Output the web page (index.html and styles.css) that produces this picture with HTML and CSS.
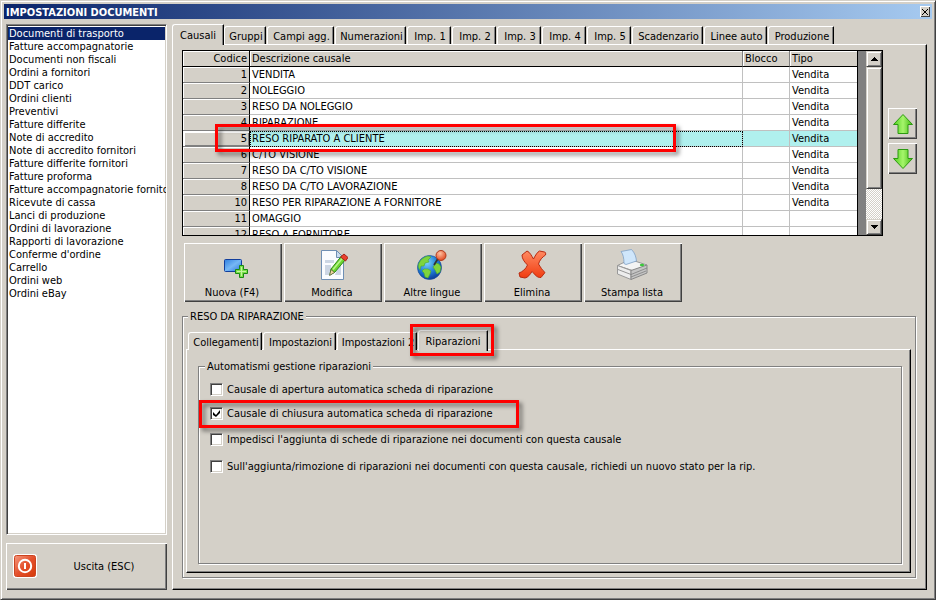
FILE: index.html
```html
<!DOCTYPE html>
<html lang="it">
<head>
    <meta charset="UTF-8">
    <meta name="viewport" content="width=device-width, initial-scale=1.0">
    <title>Impostazioni documenti</title>
    <link rel="stylesheet" href="styles.css">
</head>
<body>

<div class="window">
    <div class="titlebar">
        <h1>IMPOSTAZIONI DOCUMENTI</h1>
        <button class="close" aria-label="Chiudi">
            <svg width="6" height="6" viewBox="0 0 6 6"><path d="M0 0l6 6M6 0L0 6" stroke="#000"/></svg>
        </button>
    </div>

    <div class="workspace">
        <div class="sidebar">
            <select class="doclist" size="21" aria-label="Tipo documento">
                <option selected>Documenti di trasporto</option>
                <option>Fatture accompagnatorie</option>
                <option>Documenti non fiscali</option>
                <option>Ordini a fornitori</option>
                <option>DDT carico</option>
                <option>Ordini clienti</option>
                <option>Preventivi</option>
                <option>Fatture differite</option>
                <option>Note di accredito</option>
                <option>Note di accredito fornitori</option>
                <option>Fatture differite fornitori</option>
                <option>Fatture proforma</option>
                <option>Fatture accompagnatorie fornito</option>
                <option>Ricevute di cassa</option>
                <option>Lanci di produzione</option>
                <option>Ordini di lavorazione</option>
                <option>Rapporti di lavorazione</option>
                <option>Conferme d'ordine</option>
                <option>Carrello</option>
                <option>Ordini web</option>
                <option>Ordini eBay</option>
            </select>
            <button class="btn exit">
                <svg width="24" height="24" viewBox="0 0 24 24">
                    <defs><linearGradient id="red" x1="0" y1="0" x2="1" y2="1"><stop offset="0" stop-color="#f59a80"/><stop offset=".5" stop-color="#e4502c"/><stop offset="1" stop-color="#d63a08"/></linearGradient></defs>
                    <rect x="0" y="0" width="24" height="24" rx="3" fill="#fff"/>
                    <rect x="1.500" y="1.500" width="21" height="21" rx="2" fill="url(#red)" stroke="#cc4420"/>
                    <circle cx="12" cy="12" r="6.200" fill="none" stroke="#fff" stroke-width="2"/>
                    <path d="M12 9v6" stroke="#fff" stroke-width="2"/>
                </svg>
                <span>Uscita (ESC)</span>
            </button>
        </div>

        <div class="main">
            <div class="tabs tabs-main" role="tablist">
                <button class="tab selected" role="tab" aria-selected="true">Causali</button>
                <button class="tab" role="tab">Gruppi</button>
                <button class="tab" role="tab">Campi agg.</button>
                <button class="tab" role="tab">Numerazioni</button>
                <button class="tab" role="tab">Imp. 1</button>
                <button class="tab" role="tab">Imp. 2</button>
                <button class="tab" role="tab">Imp. 3</button>
                <button class="tab" role="tab">Imp. 4</button>
                <button class="tab" role="tab">Imp. 5</button>
                <button class="tab" role="tab">Scadenzario</button>
                <button class="tab" role="tab">Linee auto</button>
                <button class="tab" role="tab">Produzione</button>
            </div>

            <div class="page page-main">
                <div class="list-row">
                    <div class="grid">
                        <table class="causali">
                            <thead>
                                <tr><th class="code">Codice</th><th>Descrizione causale</th><th class="lock">Blocco</th><th class="type">Tipo</th></tr>
                            </thead>
                            <tbody>
                                <tr><td class="code">1</td><td>VENDITA</td><td></td><td>Vendita</td></tr>
                                <tr><td class="code">2</td><td>NOLEGGIO</td><td></td><td>Vendita</td></tr>
                                <tr><td class="code">3</td><td>RESO DA NOLEGGIO</td><td></td><td>Vendita</td></tr>
                                <tr><td class="code">4</td><td>RIPARAZIONE</td><td></td><td>Vendita</td></tr>
                                <tr class="current"><td class="code">5</td><td class="focus">RESO RIPARATO A CLIENTE</td><td></td><td>Vendita</td></tr>
                                <tr><td class="code">6</td><td>C/TO VISIONE</td><td></td><td>Vendita</td></tr>
                                <tr><td class="code">7</td><td>RESO DA C/TO VISIONE</td><td></td><td>Vendita</td></tr>
                                <tr><td class="code">8</td><td>RESO DA C/TO LAVORAZIONE</td><td></td><td>Vendita</td></tr>
                                <tr><td class="code">10</td><td>RESO PER RIPARAZIONE A FORNITORE</td><td></td><td>Vendita</td></tr>
                                <tr><td class="code">11</td><td>OMAGGIO</td><td></td><td></td></tr>
                                <tr><td class="code">12</td><td>RESO A FORNITORE</td><td></td><td></td></tr>
                            </tbody>
                        </table>
                        <div class="scrollbar">
                            <button class="scroll-btn" aria-label="Scorri su"><svg width="7" height="4" viewBox="0 0 7 4" shape-rendering="crispEdges"><path d="M3 0h1v1h1v1h1v1h1v1H0V3h1V2h1V1h1z"/></svg></button>
                            <div class="thumb"></div>
                            <button class="scroll-btn" aria-label="Scorri giù"><svg width="7" height="4" viewBox="0 0 7 4" shape-rendering="crispEdges"><path d="M0 0h7v1H6v1H5v1H4v1H3V3H2V2H1V1H0z"/></svg></button>
                        </div>
                        <div class="mark mark-row"></div>
                    </div>
                    <div class="movers">
                        <button class="btn" aria-label="Sposta su">
                            <svg width="22" height="22" viewBox="0 0 22 22">
                                <defs><linearGradient id="green" x1="0" y1="0" x2="1" y2="0"><stop offset="0" stop-color="#4fcf1c"/><stop offset=".5" stop-color="#a6f56c"/><stop offset="1" stop-color="#3fb80e"/></linearGradient></defs>
                                <path d="M11 1.500L20.500 11.500H16V20.500H6V11.500H1.500z" fill="url(#green)" stroke="#2c9a10" stroke-linejoin="round"/>
                            </svg>
                        </button>
                        <button class="btn" aria-label="Sposta giù">
                            <svg width="22" height="22" viewBox="0 0 22 22"><path d="M11 20.500L20.500 10.500H16V1.500H6V10.500H1.500z" fill="url(#green)" stroke="#2c9a10" stroke-linejoin="round"/></svg>
                        </button>
                    </div>
                </div>

                <div class="toolbar">
                    <button class="btn">
                        <svg width="32" height="32" viewBox="0 0 32 32">
                            <defs><linearGradient id="blue" x1="0" y1="0" x2="1" y2="1"><stop offset="0" stop-color="#2f7fe0"/><stop offset=".5" stop-color="#76b8f5"/><stop offset="1" stop-color="#2a72d8"/></linearGradient></defs>
                            <rect x="8.500" y="10.500" width="17" height="12" rx="1" fill="url(#blue)" stroke="#123e9c"/>
                            <path d="M23.500 16.500h4v4h4v4h-4v4h-4v-4h-4v-4h4z" fill="#7be04a" stroke="#1a8a12"/>
                            <path d="M25.500 18v9M21 22.500h9" stroke="#c4f5a0"/>
                        </svg>
                        <span>Nuova (F4)</span>
                    </button>
                    <button class="btn">
                        <svg width="32" height="32" viewBox="0 0 32 32">
                            <path d="M5.500 1.500h15l7 7v22h-22z" fill="#fafcff" stroke="#6f8fb4"/>
                            <path d="M20.500 1.500v7h7z" fill="#c9dcf0" stroke="#6f8fb4"/>
                            <path d="M9 11h9v3H9zM9 16h6v10H9zM22 17h3v9h-6z" fill="#ccd6e4"/>
                            <path d="M15 20L25.500 7l4 3.500L19 23l-5 3z" fill="#6fd532" stroke="#2d8a15"/>
                            <path d="M17 20.500L27 8.500" stroke="#b8f58c" stroke-width="1.500"/>
                            <path d="M15 20.500l3.500 3-5 3z" fill="#f0d4a0" stroke="#4c5a30" stroke-width=".7"/>
                            <path d="M24.500 8l3.500-3 4 3.500-2.500 3.500z" fill="#e8402c" stroke="#a82018" stroke-linejoin="round"/>
                        </svg>
                        <span>Modifica</span>
                    </button>
                    <button class="btn">
                        <svg width="32" height="32" viewBox="0 0 32 32">
                            <defs>
                                <radialGradient id="sea" cx=".4" cy=".3" r=".7"><stop offset="0" stop-color="#7fd4fa"/><stop offset=".6" stop-color="#1f7ed6"/><stop offset="1" stop-color="#0b3f9c"/></radialGradient>
                                <radialGradient id="pin" cx=".4" cy=".3" r=".7"><stop offset="0" stop-color="#ffc0a0"/><stop offset="1" stop-color="#e04a24"/></radialGradient>
                            </defs>
                            <circle cx="13.500" cy="18.500" r="12" fill="url(#sea)" stroke="#164c9a" stroke-width=".7"/>
                            <path d="M3 14c2-4 5-6 9-7l3 1-3 3 1 2-4 1-1 3-3 0-1 4c-2-2-2-5-1-7zM8 20l4 0 3 2-1 3-2 4-3-1-1-4-2-2zM20 14l3 1 2 3-1 5-3 2-2-4-2-3z" fill="#7ed43c" stroke="#4aa828" stroke-width=".6"/>
                            <path d="M18 16l5-8" stroke="#333" stroke-width="1.800"/>
                            <circle cx="25" cy="6.500" r="5" fill="url(#pin)" stroke="#b03a1c"/>
                        </svg>
                        <span>Altre lingue</span>
                    </button>
                    <button class="btn">
                        <svg width="32" height="32" viewBox="0 0 32 32">
                            <defs><linearGradient id="cross" x1="0" y1="0" x2="0" y2="1"><stop offset="0" stop-color="#ff8a62"/><stop offset="1" stop-color="#f03c10"/></linearGradient></defs>
                            <path d="M6 6l5-4c3 1 4.500 5 6.500 8 2-4 4-7 6-8l5 1c1 0 1.500 1.500 1 3-3 2-6 5-7 9 2 3 3.500 6 6.500 8.500L25 28.500c-4 .5-6-3-9-6-2 3-4 6-7 6.500l-5-1-1-4c3-1 7-4 8.500-8C8.500 13 6 10 6 6z" fill="url(#cross)" stroke="#b82a10" stroke-linejoin="round"/>
                        </svg>
                        <span>Elimina</span>
                    </button>
                    <button class="btn">
                        <svg width="32" height="32" viewBox="0 0 32 32">
                            <path d="M1.500 16.500L14 10.500 31 16l-13 6z" fill="#f4f4f4" stroke="#999" stroke-linejoin="round"/>
                            <path d="M8 14.500C8 9 7 5 5 2.500L15.500.5C19 4 20 8 20.500 12L10 15.500z" fill="#cfe6fb" stroke="#7f9fc4" stroke-width=".8"/>
                            <path d="M1.500 16.500L15 21.500v9L1.500 25z" fill="#ededed" stroke="#999" stroke-linejoin="round"/>
                            <path d="M15 21.500L31 16v8l-16 6.500z" fill="#c4c4c4" stroke="#888" stroke-linejoin="round"/>
                            <path d="M2 20.500l13 5 16-6.500M15 28l15-6" fill="none" stroke="#808080" stroke-width=".8"/>
                            <ellipse cx="26" cy="16" rx="2.200" ry="1.300" fill="#3cc83c"/>
                        </svg>
                        <span>Stampa lista</span>
                    </button>
                </div>

                <fieldset class="group group-causale">
                    <legend>RESO DA RIPARAZIONE</legend>
                    <div class="tabs tabs-causale" role="tablist">
                        <button class="tab" role="tab">Collegamenti</button>
                        <button class="tab" role="tab">Impostazioni</button>
                        <button class="tab" role="tab">Impostazioni 2</button>
                        <button class="tab selected" role="tab" aria-selected="true">Riparazioni<span class="mark mark-tab"></span></button>
                    </div>
                    <div class="page page-causale">
                        <fieldset class="group group-options">
                            <legend>Automatismi gestione riparazioni</legend>
                            <div class="options">
                                <label class="option"><input type="checkbox">Causale di apertura automatica scheda di riparazione</label>
                                <label class="option"><input type="checkbox" checked>Causale di chiusura automatica scheda di riparazione<span class="mark mark-option"></span></label>
                                <label class="option"><input type="checkbox">Impedisci l'aggiunta di schede di riparazione nei documenti con questa causale</label>
                                <label class="option"><input type="checkbox">Sull'aggiunta/rimozione di riparazioni nei documenti con questa causale, richiedi un nuovo stato per la rip.</label>
                            </div>
                        </fieldset>
                    </div>
                </fieldset>
            </div>
        </div>
    </div>
</div>

</body>
</html>
```
FILE: styles.css
```css
* {
    box-sizing: border-box;
}
body {
    margin: 0;
    font-family: Tahoma, "DejaVu Sans Condensed", "DejaVu Sans", sans-serif;
    font-size: 11px;
    line-height: 13px;
    color: #000;
    background-color: #d4d0c8;
}
button, select, input {
    font: inherit;
    color: inherit;
    margin: 0;
}
button {
    padding: 0;
    border: none;
    border-radius: 0;
    background-color: #d4d0c8;
}
.window {
    display: flex;
    flex-direction: column;
    min-height: 100vh;
    padding: 3px;
    border: 1px solid;
    border-color: #d4d0c8 #404040 #404040 #d4d0c8;
    box-shadow: inset 1px 1px 0 #fff, inset -1px -1px 0 #808080;
}
.titlebar {
    display: flex;
    justify-content: space-between;
    align-items: center;
    height: 15px;
    padding: 0 2px;
    background: linear-gradient(to right, #0a246a, #a6caf0);
}
.titlebar h1 {
    margin: 0;
    padding-top: 2px;
    font-size: 11px;
    font-weight: bold;
    color: #fff;
}
.close {
    display: flex;
    justify-content: center;
    align-items: center;
    width: 10px;
    height: 11px;
    box-shadow: inset 1px 1px 0 #fff, inset -1px -1px 0 #404040;
}
.workspace {
    display: flex;
    flex: 1;
    gap: 5px;
    padding: 5px 5px 6px 2px;
}

/* sidebar */
.sidebar {
    display: flex;
    flex-direction: column;
    gap: 8px;
    width: 161px;
    flex-shrink: 0;
}
.doclist {
    flex: 1;
    width: 100%;
    padding: 2px 1px 1px;
    overflow: hidden;
    background-color: #fff;
    border: 1px solid;
    border-color: #808080 #fff #fff #808080;
    border-radius: 0;
    box-shadow: inset 1px 1px 0 #404040, inset -1px -1px 0 #d4d0c8;
    outline: none;
}
.doclist option {
    min-height: 13px;
    padding: 0 1px;
    line-height: 13px;
}
.doclist option:checked {
    color: #fff;
    background: linear-gradient(#0a246a, #0a246a);
}
.btn {
    box-shadow: inset 1px 1px 0 #fff, inset -1px -1px 0 #404040, inset -2px -2px 0 #808080;
}
.exit {
    display: flex;
    align-items: center;
    height: 47px;
    padding: 0 0 2px 7px;
}
.exit span {
    flex: 1;
    padding: 2px 0 0 4px;
}

/* tabs */
.main {
    display: flex;
    flex-direction: column;
    flex: 1;
    min-width: 0;
}
.tabs {
    display: grid;
    align-items: end;
}
.tabs-main {
    height: 20px;
    grid-template-columns: 52px 43px 68px 72px repeat(5, 45px) 72px 64px 67px;
}
.tabs-causale {
    height: 19px;
    padding-left: 2px;
    grid-template-columns: 75px 74px 81px 70px;
}
.tab {
    position: relative;
    height: 18px;
    margin-right: 1px;
    padding: 2px 0 0 2px;
    white-space: nowrap;
    border-top: 1px solid #fff;
    border-left: 1px solid #fff;
    border-right: 1px solid #000;
    border-radius: 3px 1px 0 0;
    box-shadow: inset -1px 0 0 #808080;
}
.tab.selected {
    z-index: 1;
    height: 21px;
    margin: 0 0 -1px;
    padding: 2px 0 1px;
}
.page {
    display: flex;
    flex-direction: column;
    flex: 1;
    border: 1px solid;
    border-color: #fff #000 #000 #fff;
    box-shadow: inset -1px -1px 0 #808080;
}
.page-main {
    padding: 5px 9px 11px 9px;
}
.page-causale {
    padding: 10px 7px 8px 11px;
}

/* grid of causali */
.list-row {
    display: flex;
    gap: 5px;
}
.grid {
    position: relative;
    display: flex;
    flex: 1;
    height: 186px;
    overflow: hidden;
    border: 1px solid #000;
    background-color: #808080;
}
.causali {
    flex: 1;
    height: 0;
    margin-right: 8px;
    table-layout: fixed;
    border-collapse: separate;
    border-spacing: 0;
    border-right: 1px solid #000;
    background-color: #fff;
}
.causali th {
    height: 16px;
    padding: 1px 2px 0;
    line-height: 14px;
    font-weight: normal;
    text-align: left;
    background-color: #d4d0c8;
    border-right: 1px solid #808080;
    border-bottom: 1px solid #000;
    box-shadow: inset 1px 1px 0 #fff;
}
.causali td {
    height: 16px;
    padding: 1px 2px 0;
    line-height: 14px;
    border-right: 1px solid #c0c0c0;
    border-bottom: 1px solid #c0c0c0;
}
.causali th:last-child, .causali td:last-child {
    border-right: none;
}
.causali .code {
    width: 67px;
    text-align: right;
    border-right-color: #000;
}
.causali .lock {
    width: 47px;
}
.causali .type {
    width: 67px;
}
.causali td.code {
    background-color: #d4d0c8;
    border-bottom-color: #808080;
    box-shadow: inset 1px 1px 0 #fff;
}
.causali .current td {
    background-color: #b0f0ee;
}
.causali .current td.code {
    background-color: #d4d0c8;
    box-shadow: inset 2px 2px 0 #fff, inset -1px -1px 0 #808080;
}
.causali td.focus {
    outline: 1px dotted #000;
    outline-offset: -1px;
}
.scrollbar {
    display: flex;
    flex-direction: column;
    width: 16px;
    background: repeating-conic-gradient(#fff 0 25%, #d4d0c8 0 50%) 0 0 / 2px 2px;
}
.scroll-btn, .thumb {
    background-color: #d4d0c8;
    border: 1px solid;
    border-color: #d4d0c8 #404040 #404040 #d4d0c8;
    box-shadow: inset 1px 1px 0 #fff, inset -1px -1px 0 #808080;
}
.scroll-btn {
    display: flex;
    justify-content: center;
    align-items: center;
    height: 16px;
}
.thumb {
    height: 122px;
    margin-bottom: auto;
}
.movers {
    display: flex;
    flex-direction: column;
    justify-content: center;
    gap: 4px;
    padding-bottom: 4px;
}
.movers .btn {
    display: flex;
    justify-content: center;
    align-items: center;
    width: 29px;
    height: 31px;
}

.toolbar {
    display: flex;
    gap: 2px;
    padding: 7px 2px 8px;
}
.toolbar .btn {
    display: flex;
    flex-direction: column;
    align-items: center;
    gap: 5px;
    width: 98px;
    height: 59px;
    padding: 6px 2px 0 0;
}

/* group boxes */
.group {
    display: flex;
    flex-direction: column;
    flex: 1;
    min-width: 0;
    margin: 0 1px 0 0;
    border: 1px solid #808080;
    box-shadow: 1px 1px 0 #fff, inset 1px 1px 0 #fff;
}
.group legend {
    margin-left: 2px;
    padding: 1px 2px 0;
    line-height: 12px;
    background-color: #d4d0c8;
}
.group-causale {
    padding: 7px 4px 4px 3px;
}
.group-options {
    padding: 10px 4px;
}
.options {
    display: grid;
    grid-template-rows: 24px 26px 27px auto;
    align-items: start;
    justify-items: start;
    padding-left: 7px;
}
.option {
    position: relative;
    display: flex;
    align-items: center;
    gap: 4px;
}
.option input {
    appearance: none;
    width: 13px;
    height: 13px;
    background-color: #fff;
    border: 1px solid;
    border-color: #808080 #fff #fff #808080;
    box-shadow: inset 1px 1px 0 #404040, inset -1px -1px 0 #d4d0c8;
}
.option input:checked::before {
    content: "";
    display: block;
    width: 7px;
    height: 7px;
    margin: 2px;
    background-color: #000;
    clip-path: polygon(0 29%, 43% 71%, 100% 0, 100% 43%, 43% 100%, 0 71%);
}

/* red frames over the steps to follow */
.mark {
    position: absolute;
    border: 3px solid #f00;
    filter: drop-shadow(3px 3px 2px rgba(0, 0, 0, 0.5));
    pointer-events: none;
}
.mark-row {
    top: 73px;
    left: 32px;
    width: 461px;
    height: 28px;
}
.mark-tab {
    top: -7px;
    right: -7px;
    bottom: -5px;
    left: -9px;
}
.mark-option {
    top: -7px;
    left: -11px;
    width: 320px;
    height: 28px;
}
```
